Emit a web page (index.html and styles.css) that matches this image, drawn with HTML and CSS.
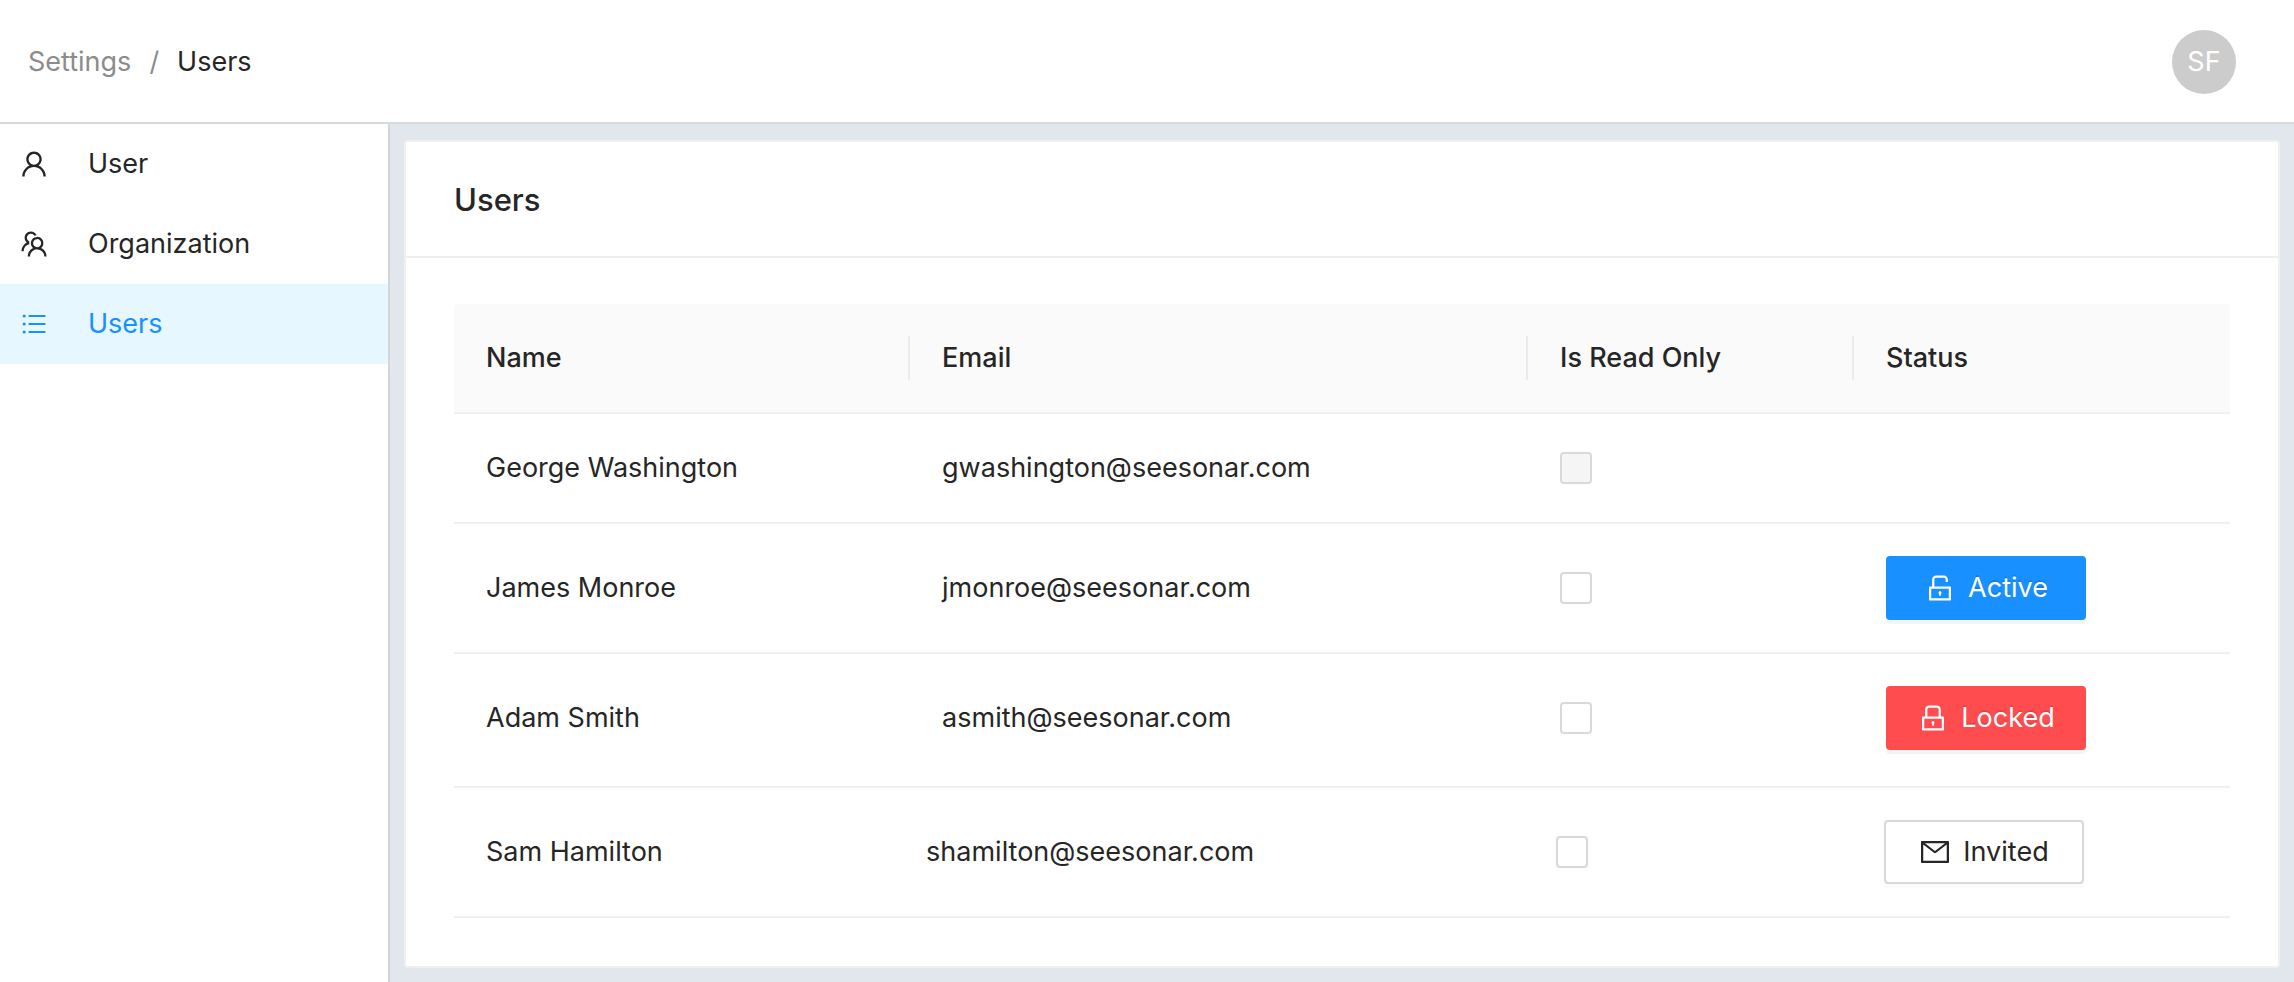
FILE: index.html
```html
<!DOCTYPE html>
<html lang="en">
<head>
<meta charset="utf-8">
<meta name="viewport" content="width=device-width, initial-scale=1">
<title>Settings / Users</title>
<link rel="stylesheet" href="styles.css">
</head>
<body>
<div class="page">
  <header class="topbar">
    <nav class="breadcrumb" aria-label="Breadcrumb">
      <a class="breadcrumb-link" href="#settings">Settings</a>
      <span class="breadcrumb-separator">/</span>
      <span class="breadcrumb-current">Users</span>
    </nav>
    <button class="avatar" type="button">SF</button>
  </header>
  <div class="body">
    <nav class="sidebar" aria-label="Settings">
      <a class="menu-item" href="#user">
        <svg class="icon" viewBox="0 0 1024 1024" aria-hidden="true"><path d="M858.5 763.6a374 374 0 00-80.6-119.5 375.63 375.63 0 00-119.5-80.6c-.4-.2-.8-.3-1.2-.5C719.5 518 760 444.7 760 362c0-137-111-248-248-248S264 225 264 362c0 82.7 40.5 156 102.8 201.1-.4.2-.8.3-1.2.5-44.8 18.9-85 46-119.5 80.6a375.63 375.63 0 00-80.6 119.5A371.7 371.7 0 00136 901.8a8 8 0 008 8.2h60c4.4 0 7.9-3.5 8-7.8 2-77.2 33-149.5 87.8-204.3 56.7-56.7 132-87.9 212.2-87.9s155.5 31.2 212.2 87.9C779 752.7 810 825 812 902.2c.1 4.4 3.6 7.8 8 7.8h60a8 8 0 008-8.2c-1-47.8-10.9-94.3-29.5-138.2zM512 534c-45.9 0-89.1-17.9-121.6-50.4S340 407.9 340 362c0-45.9 17.9-89.1 50.4-121.6S466.1 190 512 190s89.1 17.9 121.6 50.4S684 316.1 684 362c0 45.9-17.9 89.1-50.4 121.6S557.9 534 512 534z"/></svg>
        <span>User</span>
      </a>
      <a class="menu-item" href="#organization">
        <svg class="icon" viewBox="0 0 1024 1024" aria-hidden="true"><path d="M824.2 699.9a301.55 301.55 0 00-86.4-60.4C783.1 602.8 812 546.8 812 484c0-110.8-92.4-201.7-203.2-200-109.1 1.7-197 90.6-197 200 0 62.8 29 118.8 74.2 155.5a300.95 300.95 0 00-86.4 60.4C345 754.6 314 826.8 312 903.8a8 8 0 008 8.2h56c4.3 0 7.9-3.4 8-7.7 1.9-58 25.4-112.3 66.7-153.5A226.62 226.62 0 01612 684c60.9 0 118.2 23.7 161.3 66.8C814.6 792 838 846.3 840 904.3c.1 4.3 3.7 7.7 8 7.7h56a8 8 0 008-8.2c-2-77-33-149.2-87.8-203.9zM612 612c-34.2 0-66.4-13.3-90.5-37.5a126.86 126.86 0 01-37.5-91.8c.3-32.8 13.4-64.5 36.3-88 24-24.6 56.1-38.3 90.4-38.7 33.9-.3 66.8 12.9 91 36.6 24.8 24.3 38.4 56.8 38.4 91.4 0 34.2-13.3 66.3-37.5 90.5A127.3 127.3 0 01612 612zM361.5 510.4c-.9-8.7-1.4-17.5-1.4-26.4 0-15.9 1.5-31.4 4.3-46.5.7-3.6-1.2-7.3-4.5-8.8-13.6-6.1-26.1-14.5-36.9-25.1a127.54 127.54 0 01-38.7-95.4c.9-32.1 13.8-62.6 36.3-85.6 24.7-25.3 57.9-39.1 93.2-38.7 31.9.3 62.7 12.6 86 34.4 7.9 7.4 14.7 15.6 20.4 24.4 2 3.1 5.9 4.4 9.3 3.2 17.6-6.1 36.2-10.4 55.3-12.4 5.6-.6 8.8-6.6 6.3-11.6-32.5-64.3-98.9-108.7-175.7-109.9-110.9-1.7-203.3 89.2-203.3 199.9 0 62.8 28.9 118.8 74.2 155.5-31.8 14.7-61.1 35-86.5 60.4-54.8 54.7-85.8 126.9-87.8 204a8 8 0 008 8.2h56.1c4.3 0 7.9-3.4 8-7.7 1.9-58 25.4-112.3 66.7-153.5 29.4-29.4 65.4-49.8 104.7-59.7 3.9-1 6.5-4.7 6-8.7z"/></svg>
        <span>Organization</span>
      </a>
      <a class="menu-item menu-item-selected" href="#users" aria-current="page">
        <svg class="icon" viewBox="-60 -60 1144 1144" aria-hidden="true"><path d="M912 192H328c-4.4 0-8 3.6-8 8v56c0 4.4 3.6 8 8 8h584c4.4 0 8-3.6 8-8v-56c0-4.4-3.6-8-8-8zm0 284H328c-4.4 0-8 3.6-8 8v56c0 4.4 3.6 8 8 8h584c4.4 0 8-3.6 8-8v-56c0-4.4-3.6-8-8-8zm0 284H328c-4.4 0-8 3.6-8 8v56c0 4.4 3.6 8 8 8h584c4.4 0 8-3.6 8-8v-56c0-4.4-3.6-8-8-8zM104 228a56 56 0 10112 0 56 56 0 10-112 0zm0 284a56 56 0 10112 0 56 56 0 10-112 0zm0 284a56 56 0 10112 0 56 56 0 10-112 0z"/></svg>
        <span>Users</span>
      </a>
    </nav>
    <main class="content">
      <section class="card">
        <h1 class="card-title">Users</h1>
        <div class="card-body">
          <table class="table">
            <colgroup>
              <col class="col-name">
              <col class="col-email">
              <col class="col-readonly">
              <col class="col-status">
            </colgroup>
            <thead>
              <tr>
                <th scope="col">Name</th>
                <th scope="col">Email</th>
                <th scope="col">Is Read Only</th>
                <th scope="col">Status</th>
              </tr>
            </thead>
            <tbody>
              <tr>
                <td>George Washington</td>
                <td>gwashington@seesonar.com</td>
                <td><input class="checkbox" type="checkbox" aria-label="George Washington is read only" disabled></td>
                <td></td>
              </tr>
              <tr>
                <td>James Monroe</td>
                <td>jmonroe@seesonar.com</td>
                <td><input class="checkbox" type="checkbox" aria-label="James Monroe is read only"></td>
                <td>
                  <button class="button button-primary" type="button">
                    <svg class="icon" viewBox="0 0 1024 1024" aria-hidden="true"><path d="M832 464H332V240c0-30.9 25.1-56 56-56h248c30.9 0 56 25.1 56 56v68c0 4.4 3.6 8 8 8h56c4.4 0 8-3.6 8-8v-68c0-70.7-57.3-128-128-128H388c-70.7 0-128 57.3-128 128v224h-68c-17.7 0-32 14.3-32 32v384c0 17.7 14.3 32 32 32h640c17.7 0 32-14.3 32-32V496c0-17.7-14.3-32-32-32zm-40 376H232V536h560v304zM484 701v53c0 4.4 3.6 8 8 8h40c4.4 0 8-3.6 8-8v-53a48.01 48.01 0 10-56 0z"/></svg>
                    <span>Active</span>
                  </button>
                </td>
              </tr>
              <tr class="row-tall">
                <td>Adam Smith</td>
                <td>asmith@seesonar.com</td>
                <td><input class="checkbox" type="checkbox" aria-label="Adam Smith is read only"></td>
                <td>
                  <button class="button button-danger" type="button">
                    <svg class="icon" viewBox="0 0 1024 1024" aria-hidden="true"><path d="M832 464h-68V240c0-70.7-57.3-128-128-128H388c-70.7 0-128 57.3-128 128v224h-68c-17.7 0-32 14.3-32 32v384c0 17.7 14.3 32 32 32h640c17.7 0 32-14.3 32-32V496c0-17.7-14.3-32-32-32zM332 240c0-30.9 25.1-56 56-56h248c30.9 0 56 25.1 56 56v224H332V240zm460 600H232V536h560v304zM484 701v53c0 4.4 3.6 8 8 8h40c4.4 0 8-3.6 8-8v-53a48.01 48.01 0 10-56 0z"/></svg>
                    <span>Locked</span>
                  </button>
                </td>
              </tr>
              <tr class="row-invited">
                <td>Sam Hamilton</td>
                <td class="cell-email">shamilton@seesonar.com</td>
                <td class="cell-readonly"><input class="checkbox" type="checkbox" aria-label="Sam Hamilton is read only"></td>
                <td class="cell-status">
                  <button class="button button-default" type="button">
                    <svg class="icon" viewBox="0 0 1024 1024" aria-hidden="true"><path d="M928 160H96c-17.7 0-32 14.3-32 32v640c0 17.7 14.3 32 32 32h832c17.7 0 32-14.3 32-32V192c0-17.7-14.3-32-32-32zm-40 110.8V792H136V270.8l-27.6-21.5 39.3-50.5 42.8 33.3h643.1l42.8-33.3 39.3 50.5-27.7 21.5zM833.6 232L512 482 190.4 232l-42.8-33.3-39.3 50.5 27.6 21.5 341.6 265.6a55.99 55.99 0 0068.7 0L888 270.8l27.6-21.5-39.3-50.5-42.7 33.2z"/></svg>
                    <span>Invited</span>
                  </button>
                </td>
              </tr>
            </tbody>
          </table>
        </div>
      </section>
    </main>
  </div>
</div>
</body>
</html>
```
FILE: styles.css
```css
* {
  box-sizing: border-box;
}

body {
  margin: 0;
  background: #fff;
  color: #262626;
  font-family: Inter, "Liberation Sans", sans-serif;
  font-size: 27px;
  line-height: 44px;
}

a {
  color: inherit;
  text-decoration: none;
}

button {
  font: inherit;
  cursor: pointer;
}

.page {
  display: flex;
  flex-direction: column;
  min-height: 100vh;
}

.topbar {
  display: flex;
  align-items: center;
  justify-content: space-between;
  padding: 30px 58px 28px 28px;
  border-bottom: 2px solid #d9d9d9;
}

.breadcrumb {
  display: flex;
  gap: 18px;
}

.breadcrumb-link,
.breadcrumb-separator {
  color: #8c8c8c;
}

.avatar {
  width: 64px;
  height: 64px;
  padding: 0;
  border: 0;
  border-radius: 50%;
  background: #ccc;
  color: #fff;
}

.body {
  display: flex;
  flex: 1;
}

.sidebar {
  flex: none;
  width: 390px;
  border-right: 2px solid #d4d5d7;
}

.menu-item {
  display: flex;
  align-items: center;
  gap: 38px;
  padding: 18px;
}

.menu-item-selected {
  background: #e6f7ff;
  color: #1890ff;
}

.icon {
  flex: none;
  width: 32px;
  height: 32px;
  fill: currentColor;
}

.content {
  flex: 1;
  min-width: 0;
  padding: 16px 14px 14px;
  background: #e2e7ee;
}

.card {
  border: 2px solid #f0f0f0;
  border-radius: 4px;
  background: #fff;
}

.card-title {
  margin: 0;
  padding: 34px 48px 32px;
  border-bottom: 2px solid #f0f0f0;
  font-size: 31px;
  font-weight: 500;
  line-height: 48px;
}

.card-body {
  padding: 46px 48px 48px;
}

.table {
  width: 100%;
  table-layout: fixed;
  border-collapse: separate;
  border-spacing: 0;
}

.col-name {
  width: 25.68%;
}

.col-email {
  width: 34.8%;
}

.col-readonly {
  width: 18.35%;
}

th,
td {
  padding: 32px;
  border-bottom: 2px solid #f0f0f0;
  text-align: left;
}

th {
  background: linear-gradient(#ebebeb, #ebebeb) no-repeat right center / 2px 44px #fafafa;
  font-weight: 500;
}

th:first-child {
  border-top-left-radius: 4px;
}

th:last-child {
  border-top-right-radius: 4px;
  background: #fafafa;
}

.row-tall td {
  padding-bottom: 36px;
}

.row-invited .cell-email {
  padding-left: 16px;
}

.row-invited .cell-readonly {
  padding-left: 28px;
}

.row-invited .cell-status {
  padding-left: 30px;
}

.checkbox {
  display: block;
  appearance: none;
  width: 32px;
  height: 32px;
  margin: 0;
  border: 2px solid #d9d9d9;
  border-radius: 4px;
  background: #fff;
}

.checkbox:checked {
  border-color: #1890ff;
  background: #1890ff;
}

.checkbox:disabled {
  background: #f5f5f5;
}

.button {
  display: flex;
  align-items: center;
  justify-content: center;
  gap: 12px;
  width: 200px;
  height: 64px;
  padding: 0;
  border: 2px solid transparent;
  border-radius: 4px;
}

.button-primary,
.button-danger {
  color: #fff;
  box-shadow: 0 4px 0 rgba(0, 0, 0, 0.045);
  text-shadow: 0 -2px 0 rgba(0, 0, 0, 0.12);
}

.button-primary {
  border-color: #1890ff;
  background: #1890ff;
}

.button-danger {
  border-color: #ff4d4f;
  background: #ff4d4f;
}

.button-default {
  border-color: #d9d9d9;
  background: #fff;
  color: #262626;
  box-shadow: 0 4px 0 rgba(0, 0, 0, 0.016);
}
```
